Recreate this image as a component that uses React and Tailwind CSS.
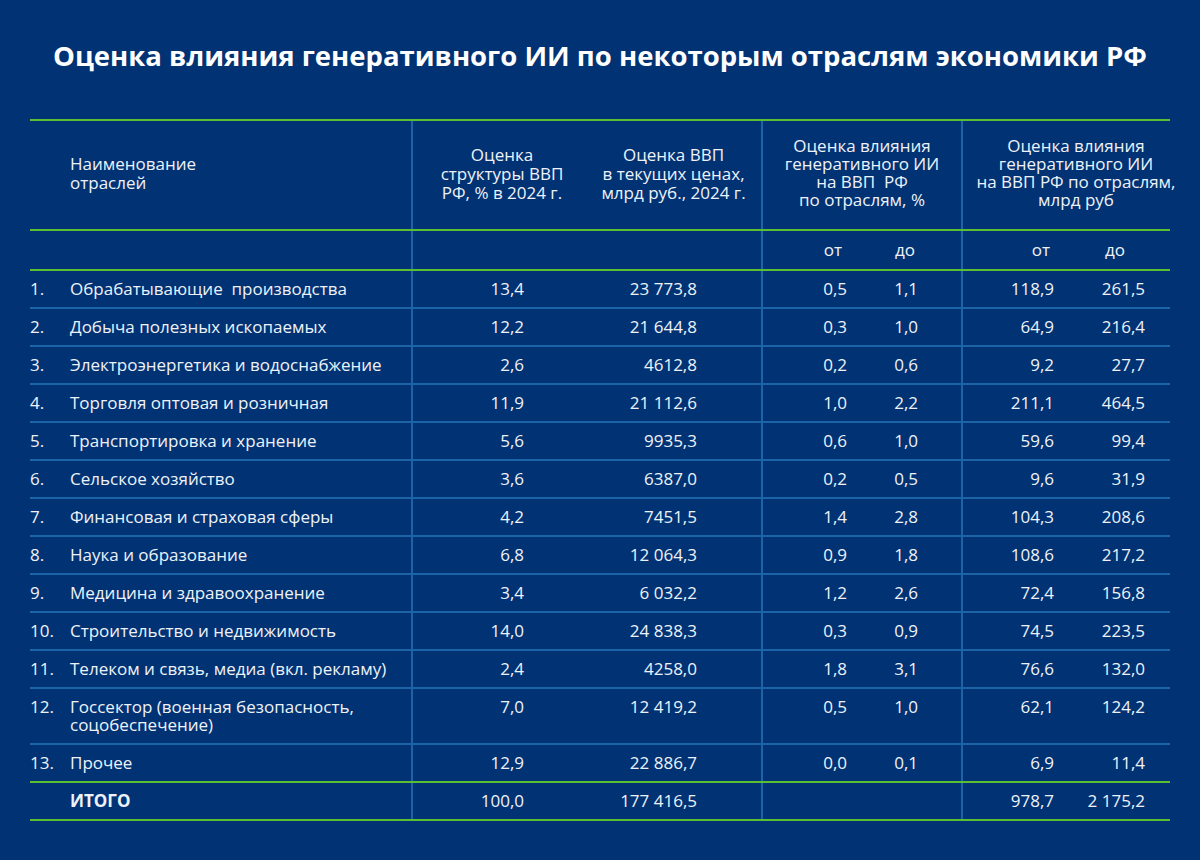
import React from "react";

const rows = [
  ["1.", "Обрабатывающие\u00a0 производства", "13,4", "23 773,8", "0,5", "1,1", "118,9", "261,5"],
  ["2.", "Добыча полезных ископаемых", "12,2", "21 644,8", "0,3", "1,0", "64,9", "216,4"],
  ["3.", "Электроэнергетика и водоснабжение", "2,6", "4612,8", "0,2", "0,6", "9,2", "27,7"],
  ["4.", "Торговля оптовая и розничная", "11,9", "21 112,6", "1,0", "2,2", "211,1", "464,5"],
  ["5.", "Транспортировка и хранение", "5,6", "9935,3", "0,6", "1,0", "59,6", "99,4"],
  ["6.", "Сельское хозяйство", "3,6", "6387,0", "0,2", "0,5", "9,6", "31,9"],
  ["7.", "Финансовая и страховая сферы", "4,2", "7451,5", "1,4", "2,8", "104,3", "208,6"],
  ["8.", "Наука и образование", "6,8", "12 064,3", "0,9", "1,8", "108,6", "217,2"],
  ["9.", "Медицина и здравоохранение", "3,4", "6 032,2", "1,2", "2,6", "72,4", "156,8"],
  ["10.", "Строительство и недвижимость", "14,0", "24 838,3", "0,3", "0,9", "74,5", "223,5"],
  ["11.", "Телеком и связь, медиа (вкл. рекламу)", "2,4", "4258,0", "1,8", "3,1", "76,6", "132,0"],
  [
    "12.",
    <>
      Госсектор (военная безопасность,
      <br />
      соцобеспечение)
    </>,
    "7,0",
    "12 419,2",
    "0,5",
    "1,0",
    "62,1",
    "124,2",
  ],
  ["13.", "Прочее", "12,9", "22 886,7", "0,0", "0,1", "6,9", "11,4"],
];

const grid =
  "grid grid-cols-[40px_341px_175px_175px_100px_100px_104px_105px]";
const vline = "border-l-2 border-[#1d63a7]";

function DataRow({ r, last }) {
  return (
    <div
      className={`${grid} border-b-2 ${
        last ? "border-[#5bbf33]" : "border-[#1d63a7]"
      }`}
    >
      <div className="py-[9px]">{r[0]}</div>
      <div className="whitespace-nowrap py-[9px]">{r[1]}</div>
      <div className={`${vline} py-[9px] pr-[62px] text-right`}>{r[2]}</div>
      <div className="py-[9px] pr-[64px] text-right">{r[3]}</div>
      <div className={`${vline} py-[9px] pr-[14px] text-right`}>{r[4]}</div>
      <div className="py-[9px] pr-[43px] text-right">{r[5]}</div>
      <div className={`${vline} py-[9px] pr-[11px] text-right`}>{r[6]}</div>
      <div className="py-[9px] pr-[25px] text-right">{r[7]}</div>
    </div>
  );
}

export default function App() {
  return (
    <div
      className="min-h-screen w-full bg-[#013274] text-[#eef2f8]"
      style={{ fontFamily: '"Open Sans", "Noto Sans", sans-serif' }}
    >
      <div className="pt-[40px] text-center text-[27.5px] font-bold leading-[32px] text-white">
        Оценка влияния генеративного ИИ по некоторым отраслям экономики РФ
      </div>

      <div className="mx-[30px] mt-[47px] border-t-2 border-[#5bbf33] text-[17px] leading-[18px]">
        {/* header */}
        <div className={`${grid} h-[110px] border-b-2 border-[#5bbf33]`}>
          <div />
          <div className="flex items-center pb-1 leading-[19px]">
            Наименование
            <br />
            отраслей
          </div>
          <div className={`${vline} flex items-center justify-center pb-1 pl-[5px] text-center leading-[19px]`}>
            Оценка
            <br />
            структуры ВВП
            <br />
            РФ, % в 2024 г.
          </div>
          <div className="flex items-center justify-center pb-1 text-center leading-[19px]">
            Оценка ВВП
            <br />
            в текущих ценах,
            <br />
            млрд руб., 2024 г.
          </div>
          <div className={`${vline} col-span-2 flex items-center justify-center pb-1 text-center`}>
            Оценка влияния
            <br />
            генеративного ИИ
            <br />
            на ВВП&nbsp; РФ
            <br />
            по отраслям, %
          </div>
          <div className={`${vline} col-span-2 flex items-center pb-1`}>
            <div className="w-[226px] shrink-0 whitespace-nowrap text-center">
              Оценка влияния
              <br />
              генеративного ИИ
              <br />
              на ВВП РФ по отраслям,
              <br />
              млрд руб
            </div>
          </div>
        </div>

        {/* sub header */}
        <div className={`${grid} border-b-2 border-[#5bbf33]`}>
          <div className="py-[10px]" />
          <div className="py-[10px]" />
          <div className={`${vline} py-[10px]`} />
          <div className="py-[10px]" />
          <div className={`${vline} py-[10px] pr-[19px] text-right`}>от</div>
          <div className="py-[10px] pr-[46px] text-right">до</div>
          <div className={`${vline} py-[10px] pr-[15px] text-right`}>от</div>
          <div className="py-[10px] pr-[45px] text-right">до</div>
        </div>

        {rows.map((r, i) => (
          <DataRow key={i} r={r} last={i === rows.length - 1} />
        ))}

        {/* total */}
        <div className={`${grid} border-b-2 border-[#5bbf33]`}>
          <div className="py-[9px]" />
          <div className="py-[9px] font-bold">ИТОГО</div>
          <div className={`${vline} py-[9px] pr-[62px] text-right`}>100,0</div>
          <div className="py-[9px] pr-[64px] text-right">177 416,5</div>
          <div className={`${vline} py-[9px]`} />
          <div className="py-[9px]" />
          <div className={`${vline} py-[9px] pr-[11px] text-right`}>978,7</div>
          <div className="py-[9px] pr-[25px] text-right">2 175,2</div>
        </div>
      </div>
    </div>
  );
}
